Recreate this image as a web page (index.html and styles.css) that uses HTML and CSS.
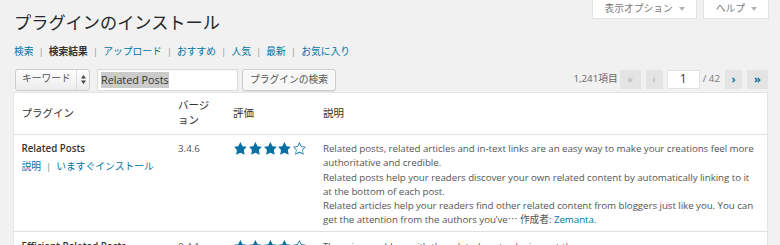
FILE: index.html
```html
<!DOCTYPE html>
<html lang="ja">
<head>
<meta charset="utf-8">
<title>プラグインのインストール</title>
<link rel="stylesheet" href="styles.css">
</head>
<body>
<div class="wrap">
  <div class="head">
    <h2 class="title">プラグインのインストール</h2>
    <div class="meta-links">
      <a class="meta-toggle" href="#">表示オプション<span class="caret"></span></a>
      <a class="meta-toggle" href="#">ヘルプ<span class="caret"></span></a>
    </div>
  </div>

  <ul class="subsub">
    <li><a href="#">検索</a><span class="sep">|</span></li>
    <li><span class="current">検索結果</span><span class="sep">|</span></li>
    <li><a href="#">アップロード</a><span class="sep">|</span></li>
    <li><a href="#">おすすめ</a><span class="sep">|</span></li>
    <li><a href="#">人気</a><span class="sep">|</span></li>
    <li><a href="#">最新</a><span class="sep">|</span></li>
    <li><a href="#">お気に入り</a></li>
  </ul>

  <div class="tablenav">
    <div class="search">
      <div class="select">
        <span class="select-label">キーワード</span>
        <span class="select-arrows">
          <svg width="5" height="9" viewBox="0 0 5 9"><path d="M2.5 0L5 3.4H0z M2.5 9L0 5.6h5z" fill="#444"/></svg>
        </span>
      </div>
      <div class="field"><span class="selected">Related Posts</span></div>
      <button class="btn" type="button">プラグインの検索</button>
    </div>
    <div class="pages">
      <span class="count">1,241項目</span>
      <span class="pg wide first disabled">«</span>
      <span class="pg disabled">‹</span>
      <span class="page-input">1</span>
      <span class="total">/ 42</span>
      <a class="pg" href="#">›</a>
      <a class="pg wide" href="#">»</a>
    </div>
  </div>

  <table class="plugins">
    <colgroup>
      <col class="c-name"><col class="c-ver"><col class="c-rate"><col class="c-desc">
    </colgroup>
    <thead>
      <tr><th>プラグイン</th><th>バージョン</th><th>評価</th><th>説明</th></tr>
    </thead>
    <tbody>
      <tr>
        <td><strong class="pname">Related Posts</strong>
          <div class="actions"><a href="#">説明</a><span class="sep">|</span><a href="#">いますぐインストール</a></div></td>
        <td>3.4.6</td>
        <td>
          <div class="stars">
            <svg viewBox="-0.5 -0.5 21 21"><path d="M10 1l3 6 6 .75-4.12 4.62L16 19l-6-3-6 3 1.13-6.63L1 7.75 7 7z"/></svg>
            <svg viewBox="-0.5 -0.5 21 21"><path d="M10 1l3 6 6 .75-4.12 4.62L16 19l-6-3-6 3 1.13-6.63L1 7.75 7 7z"/></svg>
            <svg viewBox="-0.5 -0.5 21 21"><path d="M10 1l3 6 6 .75-4.12 4.62L16 19l-6-3-6 3 1.13-6.63L1 7.75 7 7z"/></svg>
            <svg viewBox="-0.5 -0.5 21 21"><path d="M10 1l3 6 6 .75-4.12 4.62L16 19l-6-3-6 3 1.13-6.63L1 7.75 7 7z"/></svg>
            <svg viewBox="-0.5 -0.5 21 21"><path d="M10 1L7 7l-6 .75 4.13 4.62L4 19l6-3 6 3-1.12-6.63L19 7.75 13 7zm0 2.24l2.34 4.69 4.73.53-3.18 3.56.87 5.15L10 14.32l-4.76 2.85.87-5.15-3.180-3.56 4.71-.53z"/></svg>
          </div>
        </td>
        <td class="desc">Related posts, related articles and in-text links are an easy way to make your creations feel more authoritative and credible.<br>Related posts help your readers discover your own related content by automatically linking to it at the bottom of each post.<br>Related articles help your readers find other related content from bloggers just like you. You can get the attention from the authors you’ve<span class="ell">…</span> <span class="ja">作成者</span>: <a href="#">Zemanta.</a></td>
      </tr>
      <tr>
        <td><strong class="pname">Efficient Related Posts</strong>
          <div class="actions"><a href="#">説明</a><span class="sep">|</span><a href="#">いますぐインストール</a></div></td>
        <td>0.4.1</td>
        <td>
          <div class="stars">
            <svg viewBox="-0.5 -0.5 21 21"><path d="M10 1l3 6 6 .75-4.12 4.62L16 19l-6-3-6 3 1.13-6.63L1 7.75 7 7z"/></svg>
            <svg viewBox="-0.5 -0.5 21 21"><path d="M10 1l3 6 6 .75-4.12 4.62L16 19l-6-3-6 3 1.13-6.63L1 7.75 7 7z"/></svg>
            <svg viewBox="-0.5 -0.5 21 21"><path d="M10 1l3 6 6 .75-4.12 4.62L16 19l-6-3-6 3 1.13-6.63L1 7.75 7 7z"/></svg>
            <svg viewBox="-0.5 -0.5 21 21"><path d="M10 1l3 6 6 .75-4.12 4.62L16 19l-6-3-6 3 1.13-6.63L1 7.75 7 7z"/></svg>
            <svg viewBox="-0.5 -0.5 21 21"><path d="M10 1L7 7l-6 .75 4.13 4.62L4 19l6-3 6 3-1.12-6.63L19 7.75 13 7zm0 2.24l2.34 4.69 4.73.53-3.18 3.56.87 5.15L10 14.32l-4.76 2.85.87-5.15-3.18-3.56 4.71-.53z"/></svg>
          </div>
        </td>
        <td class="desc">There is a problem with the related posts plugins out there.</td>
      </tr>
    </tbody>
  </table>
</div>
</body>
</html>
```

FILE: styles.css
```css
* { box-sizing: border-box; }

html, body {
  margin: 0;
  padding: 0;
  background: #f1f1f1;
}

body {
  font-family: "Open Sans", "Noto Sans CJK JP", sans-serif;
  font-size: 9.75px;
  line-height: 14.6px;
  color: #444;
  overflow: hidden;
}

a { color: #0074a2; text-decoration: none; }

.wrap {
  padding: 0 12px 0 13px;
}

/* header */
.head {
  display: flex;
  justify-content: space-between;
  align-items: flex-start;
}

.title {
  margin: 0;
  padding: 11px 0 0 1px;
  font-size: 17.2px;
  line-height: 23px;
  font-weight: 400;
  color: #23282d;
}

.meta-links {
  display: flex;
  gap: 6px;
  margin-right: -1px;
}

.meta-toggle {
  display: flex;
  align-items: center;
  height: 19px;
  padding: 0 11px 0 12px;
  background: #fff;
  border: 1px solid #e3e3e3;
  border-top: 0;
  color: #777;
  font-size: 9.75px;
}

.caret {
  display: inline-block;
  margin-left: 6px;
  width: 0;
  height: 0;
  border-left: 3px solid transparent;
  border-right: 3px solid transparent;
  border-top: 4px solid #b4b4b4;
}

/* subsubsub */
.subsub {
  list-style: none;
  margin: 11px 0 0 1px;
  padding: 0;
  display: flex;
  color: #666;
}

.subsub .sep {
  color: #999;
  margin: 0 5px;
}

.subsub .current {
  color: #333;
  font-weight: 700;
}

/* tablenav */
.tablenav {
  margin-top: 8px;
  height: 24px;
  display: flex;
  justify-content: space-between;
  align-items: center;
}

.search {
  display: flex;
  align-items: center;
  padding-left: 2px;
}

.select {
  display: flex;
  align-items: stretch;
  width: 75px;
  height: 22px;
  border: 1px solid #cdcdcd;
  border-radius: 3px;
  background: linear-gradient(#fdfdfd, #ececec);
  color: #555;
}

.select-label {
  flex: 1;
  display: flex;
  align-items: center;
  padding-left: 6px;
}

.select-arrows {
  width: 13px;
  display: flex;
  align-items: center;
  justify-content: center;
  border-left: 1px solid #dedede;
}

.field {
  margin-left: 7px;
  width: 141px;
  height: 22px;
  display: flex;
  align-items: center;
  padding-left: 3px;
  background: #fff;
  border: 1px solid #ddd;
  box-shadow: inset 0 1px 2px rgba(0,0,0,.05);
  font-size: 10.75px;
  color: #333;
}

.selected {
  background: #cbcbcb;
  line-height: 16px;
}

.btn {
  margin-left: 4px;
  height: 22px;
  padding: 0 7px;
  border: 1px solid #ccc;
  border-radius: 3px;
  background: #f7f7f7;
  box-shadow: 0 1px 0 #fff inset, 0 1px 0 rgba(0,0,0,.06);
  color: #555;
  font-family: "Open Sans", "Noto Sans CJK JP", sans-serif;
  font-size: 9.75px;
  line-height: 1;
}

.pages {
  display: flex;
  align-items: center;
  color: #666;
}

.pg {
  display: flex;
  align-items: center;
  justify-content: center;
  width: 17px;
  height: 19px;
  margin-left: 5px;
  background: #e4e4e4;
  color: #0074a2;
  font-weight: 700;
  font-size: 11px;
}

.pg.first { margin-left: 2px; }

.pg.wide { width: 21px; }

.pg.disabled { color: #b0b0b0; font-weight: 400; }

.page-input {
  display: flex;
  align-items: center;
  justify-content: center;
  width: 33px;
  height: 19px;
  margin-left: 4px;
  background: #fff;
  border: 1px solid #e2e2e2;
  font-size: 12px;
  color: #333;
}

.total {
  margin: 0 0 0 3px;
  color: #777;
}

/* table */
.plugins {
  width: 100%;
  margin-top: 0;
  border: 1px solid #e5e5e5;
  border-collapse: collapse;
  table-layout: fixed;
  background: #fff;
}

.c-name { width: 157px; }
.c-ver { width: 55px; }
.c-rate { width: 90px; }

.plugins th {
  text-align: left;
  font-weight: 400;
  font-size: 10.5px;
  line-height: 15px;
  padding: 5.5px 7.5px 5.5px;
  color: #333;
  vertical-align: middle;
  border-bottom: 1px solid #e1e1e1;
}

.plugins td {
  padding: 7.5px 7.5px 4px;
  vertical-align: top;
  color: #555;
  line-height: 14.2px;
  border-bottom: 1px solid #e1e1e1;
}

.desc {
  letter-spacing: -0.06px;
}

.pname {
  display: block;
  color: #333;
  font-weight: 600;
  margin-bottom: 4px;
}

.actions .sep {
  color: #888;
  margin: 0 5px;
}

.stars {
  display: flex;
  fill: #0a6fa3;
  margin-top: -1px;
}

.stars svg {
  width: 14.8px;
  height: 14.8px;
}

.ell, .ja {
  font-family: "Noto Sans CJK JP", sans-serif;
  line-height: 1;
}
```
